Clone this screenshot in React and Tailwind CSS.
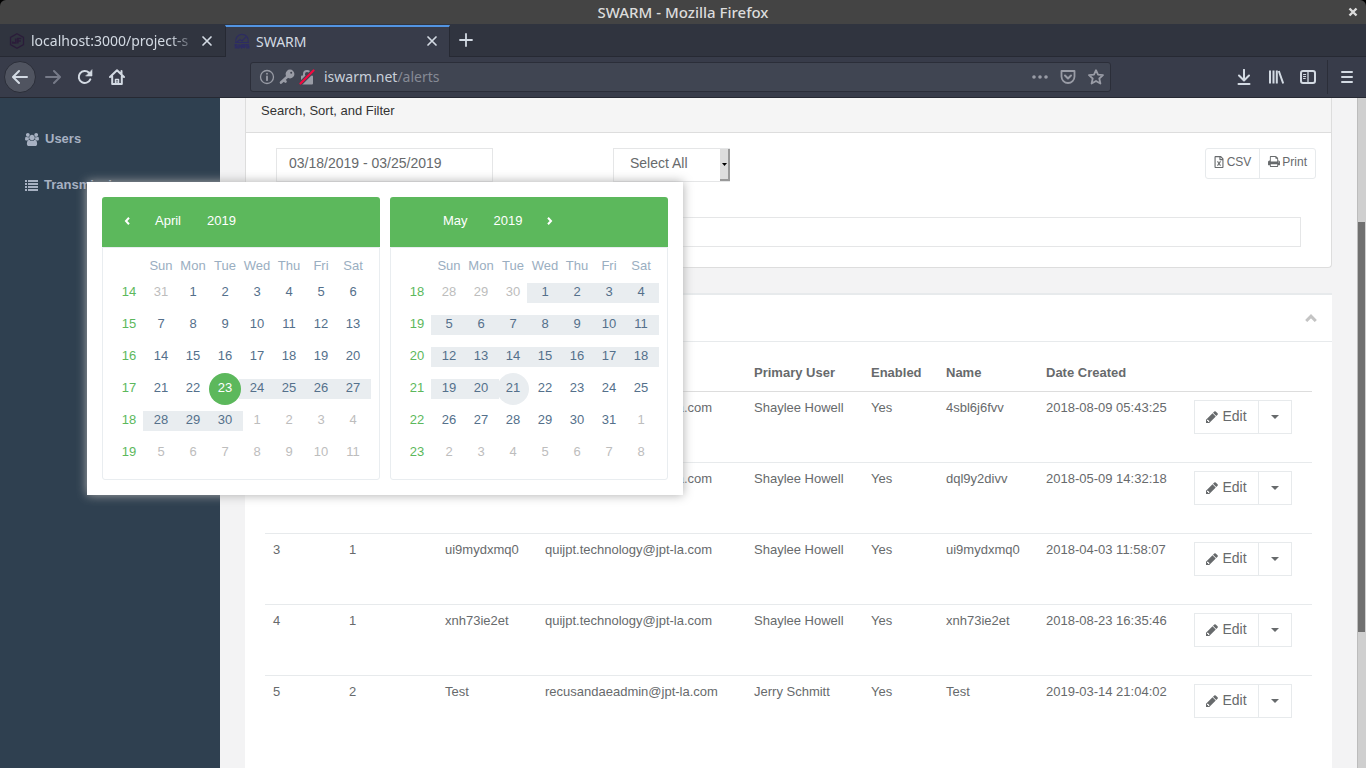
import React from "react";
import { FaRegFileExcel } from "react-icons/fa";

const UsersIcon = () => (
  <svg viewBox="0 0 1920 1792" className="h-[13px] w-[14px]" fill="currentColor" aria-hidden="true">
    <path d="M593 896q-162 5-265 128h-134q-82 0-138-40.5t-56-118.5q0-353 124-353 6 0 43.5 21t97.5 42.5 119 21.5q67 0 133-23-5 37-5 66 0 139 81 256zm1071 637q0 120-73 189.5t-194 69.5h-874q-121 0-194-69.5t-73-189.5q0-53 3.5-103.5t14-109 26.5-108.5 43-97.5 62-81 85.5-53.5 111.5-20q10 0 43 21.5t73 48 107 48 135 21.5 135-21.5 107-48 73-48 43-21.5q61 0 111.5 20t85.5 53.5 62 81 43 97.5 26.5 108.5 14 109 3.5 103.5zm-1024-1277q0 106-75 181t-181 75-181-75-75-181 75-181 181-75 181 75 75 181zm704 384q0 159-112.5 271.5t-271.5 112.5-271.5-112.5-112.5-271.5 112.5-271.5 271.5-112.5 271.5 112.5 112.5 271.5zm576 225q0 78-56 118.5t-138 40.5h-134q-103-123-265-128 81-117 81-256 0-29-5-66 66 23 133 23 59 0 119-21.5t97.5-42.5 43.5-21q124 0 124 353zm-128-609q0 106-75 181t-181 75-181-75-75-181 75-181 181-75 181 75 75 181z" />
  </svg>
);

const ListIcon = () => (
  <svg viewBox="0 0 13 11" className="h-[11px] w-[13px]" fill="currentColor" aria-hidden="true">
    {[0, 3, 6, 9].map((y) => (
      <g key={y}>
        <rect x="0" y={y} width="2" height="2" />
        <rect x="3" y={y} width="10" height="2" />
      </g>
    ))}
  </svg>
);

const PencilIcon = () => (
  <svg viewBox="128 128 1536 1536" className="h-3 w-3" fill="currentColor" aria-hidden="true">
    <path d="M491 1536l91-91-235-235-91 91v107h128v128h107zM960 416l416 416-832 832h-416v-416zm683 96q0 53-37 90l-166 166-416-416 166-165q36-38 90-38 53 0 91 38l235 234q37 39 37 91z" />
  </svg>
);

const PrintIcon = () => (
  <svg viewBox="64 128 1664 1536" className="h-[11px] w-[12px]" fill="currentColor" aria-hidden="true">
    <path d="M448 1536h896v-256h-896v256zm0-640h896v-384h-160q-40 0-68-28t-28-68v-160h-640v640zm1152 64q0-26-19-45t-45-19-45 19-19 45 19 45 45 19 45-19 19-45zm128 0v416q0 13-9.5 22.5t-22.5 9.5h-224v160q0 40-28 68t-68 28h-960q-40 0-68-28t-28-68v-160h-224q-13 0-22.5-9.5t-9.5-22.5v-416q0-79 56.5-135.5t135.5-56.5h64v-544q0-40 28-68t68-28h672q40 0 88 20t76 48l152 152q28 28 48 76t20 88v256h64q79 0 135.5 56.5t56.5 135.5z" />
  </svg>
);

const CalendarArrow = ({ path }) => (
  <svg viewBox="0 0 6 8" className="mx-auto mb-[2px] h-2 w-[6px]" fill="none" stroke="currentColor" strokeWidth="2" aria-hidden="true">
    <path d={path} />
  </svg>
);

/* 16px toolbar glyph with round strokes */
const Glyph = ({ children, className = "" }) => (
  <svg
    viewBox="0 0 16 16"
    className={`h-4 w-4 shrink-0 ${className}`}
    fill="none"
    stroke="currentColor"
    strokeWidth="2"
    strokeLinecap="round"
    strokeLinejoin="round"
    aria-hidden="true"
  >
    {children}
  </svg>
);

const CloseGlyph = () => (
  <Glyph>
    <path d="M4 4l8 8M12 4l-8 8" strokeWidth="1.7" />
  </Glyph>
);

function TitleBar() {
  return (
    <div className="bg-black">
      <header className="grid h-6 grid-cols-[1fr_auto_1fr] items-center rounded-t-md bg-[#444444] text-[#dcdcdc]">
        <span />
        <h1 className="text-[15px] leading-6 font-medium">SWARM - Mozilla Firefox</h1>
        <button type="button" aria-label="Close window" className="mr-2 justify-self-end">
          <svg viewBox="0 0 10 10" className="h-[10px] w-[10px]" stroke="currentColor" strokeWidth="2.4" aria-hidden="true">
            <path d="M1.5 1.5l7 7M8.500 1.500l-7 7" />
          </svg>
        </button>
      </header>
    </div>
  );
}

function TabBar() {
  return (
    <div className="flex h-[33px] border-b border-[#262933] bg-[#30343f] text-[14px] text-[#d3dae3]" role="tablist">
      <div role="tab" aria-selected="false" className="flex w-[225px] items-center pt-px pr-[9px] pl-[9px]">
        <svg viewBox="0 0 16 16" className="h-4 w-4 shrink-0" fill="none" stroke="#2b1c3a" strokeWidth="1.3" aria-hidden="true">
          <path d="M8 .8l6.500 3.700v7L8 15.200l-6.500-3.700v-7z" />
          <path d="M6.800 5.500v4.300H3.700V8.500M8.800 10.500v-5h3.500M8.800 8h3" strokeWidth="1.7" />
        </svg>
        <span className="ml-[6px] w-[166px] overflow-hidden whitespace-nowrap [mask-image:linear-gradient(to_right,black_84%,transparent)]">
          localhost:3000/project-s
        </span>
        <button type="button" aria-label="Close tab" className="ml-[2px]">
          <CloseGlyph />
        </button>
      </div>
      <div
        role="tab"
        aria-selected="true"
        className="mt-px -mb-px flex w-[225px] items-center border-x border-t-2 border-x-[#262933] border-t-[#5294e2] bg-[#383c4a] pr-[9px] pb-[2px] pl-2"
      >
        <svg viewBox="0 0 16 16" className="h-4 w-4 shrink-0" fill="none" stroke="#2d2c63" strokeWidth="1.2" aria-hidden="true">
          <path d="M2 9.500a6.300 6.300 0 1112 0M3 9l3-2.500 2 1.500 4-4M1 9.500h14" />
          <path d="M3.500 11.600H1.200v1.500h2v1.600H.8M5 11.300v3.300l1.200-1.500 1.200 1.500v-3.300M9 14.900v-3.300h2v1.800H9l2 1.500M15 11.600h-2.200v1.500h2v1.600h-2.500" strokeWidth="1.400" />
        </svg>
        <span className="ml-[6px] flex-1">SWARM</span>
        <button type="button" aria-label="Close tab">
          <CloseGlyph />
        </button>
      </div>
      <button type="button" aria-label="New tab" className="px-2">
        <Glyph>
          <path d="M8 2v12M2 8h12" strokeWidth="1.8" />
        </Glyph>
      </button>
    </div>
  );
}

function Toolbar() {
  return (
    <nav className="flex h-[41px] items-center border-b border-[#262933] bg-[#383c4a] pr-[11px] text-[#d3dae3]">
      <button
        type="button"
        aria-label="Back"
        className="ml-1 flex h-8 w-8 items-center justify-center rounded-full border border-[#2b2e39] bg-[#505460]"
      >
        <Glyph>
          <path d="M15 8H1.500M7 2L1 8l6 6" />
        </Glyph>
      </button>
      <button type="button" aria-label="Forward" className="ml-[9px] text-[#767a88]">
        <Glyph>
          <path d="M1 8h13.500M9 2l6 6-6 6" />
        </Glyph>
      </button>
      <button type="button" aria-label="Reload" className="ml-4">
        <Glyph>
          <path d="M13.300 10.300A6 6 0 1112 3.700l1.500 1.500" />
          <path d="M15 1v6H9z" fill="currentColor" strokeWidth="0.6" />
        </Glyph>
      </button>
      <button type="button" aria-label="Home" className="ml-4">
        <Glyph>
          <path d="M1 8l7-6.800L15 8M3.200 7.500V15h9.600V7.500M12.500 2v3" />
          <path d="M6.500 15v-4.500h3V15M8 13v.1" strokeWidth="1.500" />
        </Glyph>
      </button>
      <div className="ml-[125px] flex h-[30px] max-w-[861px] flex-1 items-center rounded-[3px] border border-[#2b2e39] bg-[#404552] px-2 text-[#999ca6]">
        <Glyph>
          <circle cx="8" cy="8" r="6.500" strokeWidth="1.300" />
          <path d="M8 7.500v3.700M8 4.600v.2" strokeWidth="1.800" />
        </Glyph>
        <Glyph className="ml-1">
          <circle cx="11" cy="5" r="3.600" fill="currentColor" strokeWidth="1.600" />
          <path d="M8 8l-6 5.500M5 11l1.500 1.500" strokeWidth="2.600" />
          <circle cx="12.200" cy="3.800" r="1" fill="#404552" stroke="none" />
        </Glyph>
        <Glyph className="ml-1">
          <path d="M5 7V5a3 3 0 016 0v2" />
          <rect x="3" y="7.500" width="10" height="7" fill="currentColor" />
          <path d="M1.500 14.500L14.500 1.500" stroke="#404552" strokeWidth="4" />
          <path d="M1.500 14.500L14.500 1.500" stroke="#f5083f" strokeWidth="2.200" />
        </Glyph>
        <label className="relative ml-[9px] flex-1 text-[14px] leading-5">
          <input
            aria-label="Address"
            defaultValue="iswarm.net/alerts"
            className="w-full bg-transparent text-transparent outline-none"
          />
          <span aria-hidden="true" className="pointer-events-none absolute inset-0 text-[#868a95]">
            <span className="text-[#c9d0da]">iswarm.net</span>/alerts
          </span>
        </label>
        <button type="button" aria-label="Page actions">
          <Glyph>
            <path d="M2 8h.01M8 8h.01M14 8h.01" strokeWidth="3.600" />
          </Glyph>
        </button>
        <button type="button" aria-label="Save to Pocket" className="ml-3">
          <Glyph>
            <path d="M1.500 2h13v5.500a6.500 6.500 0 01-13 0z" strokeWidth="1.800" />
            <path d="M5 6.500l3 3 3-3" />
          </Glyph>
        </button>
        <button type="button" aria-label="Bookmark" className="ml-3 -mr-[2px]">
          <Glyph>
            <path d="M8 1.200l2 4.500 5 .5-3.700 3.300 1.100 5L8 11.900l-4.400 2.600 1.100-5L1 6.200l5-.5z" strokeWidth="1.800" />
          </Glyph>
        </button>
      </div>
      <div className="ml-auto flex items-center">
        <button type="button" aria-label="Downloads">
          <Glyph>
            <path d="M8 .8v10M3 6.500l5 5 5-5M2.500 15h11" />
          </Glyph>
        </button>
        <button type="button" aria-label="Library" className="ml-4">
          <Glyph>
            <path d="M2 1.500v13M5.500 1.500v13M8.800 1.500v13M10.800 2l4.400 12.500" strokeLinecap="butt" />
          </Glyph>
        </button>
        <button type="button" aria-label="Sidebars" className="ml-4">
          <Glyph>
            <rect x="1" y="2" width="14" height="12" rx="2" />
            <path d="M8 2v12" strokeWidth="1.300" />
            <path d="M3.500 5.500h2.200M3.500 7.500h2.200M3.500 9.500h1.800" strokeWidth="1" />
          </Glyph>
        </button>
        <span className="ml-[11px] h-[34px] w-px bg-[#2b2e39]" />
        <button type="button" aria-label="Menu" className="ml-[11px]">
          <Glyph>
            <path d="M3 3h10M3 8h10M3 13h10" />
          </Glyph>
        </button>
      </div>
    </nav>
  );
}

const DAYS = ["Sun", "Mon", "Tue", "Wed", "Thu", "Fri", "Sat"];

/* "lead" and "length" describe the month grid; days outside it are muted */
const MONTHS = [
  { name: "April", previousLast: 31, lead: 1, length: 30, firstWeek: 14, range: [23, 30], selected: 23, prev: true },
  { name: "May", previousLast: 30, lead: 3, length: 31, firstWeek: 18, range: [1, 20], end: 21, next: true },
];

function Month({ month }) {
  const weeks = Array.from({ length: 6 }, (_, w) =>
    Array.from({ length: 7 }, (_, d) => {
      const n = w * 7 + d - month.lead + 1;
      if (n < 1) return { label: month.previousLast + n, muted: true };
      if (n > month.length) return { label: n - month.length, muted: true };
      return {
        label: n,
        selected: n === month.selected,
        end: n === month.end,
        ranged: n >= month.range[0] && n <= month.range[1] && n !== month.selected,
      };
    })
  );
  return (
    <section className="w-[278px]">
      <div className="flex h-[50px] rounded-t-[3px] bg-[#5cb85c] px-[10px] text-white">
        {month.prev ? (
          <button type="button" aria-label="Previous month" className="w-[30px]">
            <CalendarArrow path="M5 .8L2 4l3 3.200" />
          </button>
        ) : (
          <span className="w-[30px]" />
        )}
        <button type="button" className="px-[13px] pb-[2px]">{month.name}</button>
        <button type="button" className="px-[13px] pb-[2px]">2019</button>
        {month.next && (
          <button type="button" aria-label="Next month" className="w-[30px]">
            <CalendarArrow path="M1 .8L4 4 1 7.200" />
          </button>
        )}
      </div>
      <div className="rounded-b-[3px] border border-[#e9edf0] p-[10px]">
        <table className="table-fixed border-collapse text-center">
          <thead>
            <tr className="h-[19px] leading-[15px] text-[#9aaec1]">
              <th className="w-8 p-0" />
              {DAYS.map((d) => (
                <th key={d} className="w-8 p-0 pb-1 font-normal">{d}</th>
              ))}
            </tr>
          </thead>
          <tbody>
            {weeks.map((week, w) => (
              <tr key={w} className="h-8">
                <td className="p-0 pb-[2px] leading-[30px] text-[#5cb85c]">{month.firstWeek + w}</td>
                {week.map((day, d) => (
                  <td key={d} className="relative p-0">
                    {day.ranged && <span className="absolute -inset-x-[2px] top-[6px] h-5 bg-[#e9edf0]" />}
                    <button
                      type="button"
                      className={
                        "relative block h-8 w-8 rounded-full pb-[2px] leading-[30px] " +
                        (day.selected
                          ? "z-10 bg-[#5cb85c] text-white"
                          : day.end
                          ? "z-10 bg-[#e9edf0] text-[#54708b]"
                          : day.muted
                          ? "text-[#bdbdbd]"
                          : "text-[#54708b]")
                      }
                    >
                      {day.label}
                    </button>
                  </td>
                ))}
              </tr>
            ))}
          </tbody>
        </table>
      </div>
    </section>
  );
}

const COLUMNS = [
  ["ID", "w-[76px]"],
  ["Account", "w-[96px]"],
  ["Username", "w-[100px]"],
  ["Email", "w-[209px]"],
  ["Primary User", "w-[117px]"],
  ["Enabled", "w-[75px]"],
  ["Name", "w-[100px]"],
  ["Date Created", "w-[148px]"],
  ["", ""],
];

const ROWS = [
  ["1", "1", "4sbl6j6fvv", "quijpt.technology@jpt-la.com", "Shaylee Howell", "Yes", "4sbl6j6fvv", "2018-08-09 05:43:25"],
  ["2", "1", "dql9y2divv", "quijpt.technology@jpt-la.com", "Shaylee Howell", "Yes", "dql9y2divv", "2018-05-09 14:32:18"],
  ["3", "1", "ui9mydxmq0", "quijpt.technology@jpt-la.com", "Shaylee Howell", "Yes", "ui9mydxmq0", "2018-04-03 11:58:07"],
  ["4", "1", "xnh73ie2et", "quijpt.technology@jpt-la.com", "Shaylee Howell", "Yes", "xnh73ie2et", "2018-08-23 16:35:46"],
  ["5", "2", "Test", "recusandaeadmin@jpt-la.com", "Jerry Schmitt", "Yes", "Test", "2019-03-14 21:04:02"],
];

function FilterCard() {
  return (
    <section className="rounded-b-[4px] border border-t-0 border-[#dddddd] bg-white">
      <h2 className="h-[35px] border-b border-[#dddddd] bg-[#f5f5f5] px-[15px] pt-[3px] leading-5 text-[#333333]">
        Search, Sort, and Filter
      </h2>
      <div className="p-[15px] pb-5">
        <div className="flex items-start">
          <input
            aria-label="Date range"
            defaultValue="03/18/2019 - 03/25/2019"
            className="ml-[15px] h-[34px] w-[217px] border border-[#e5e6e7] px-3 pb-1 text-[14px]"
          />
          <div className="relative ml-[120px]">
            <select
              aria-label="Filter"
              className="block h-[34px] w-[117px] appearance-none border border-[#e5e6e7] bg-white px-4 pb-1 text-[14px]"
            >
              <option>Select All</option>
            </select>
            <span className="pointer-events-none absolute top-px right-0 flex h-8 w-[10px] items-center justify-center border-r-2 border-b-2 border-[#999999] bg-[#dddddd]">
              <svg viewBox="0 0 5 3" className="h-[3px] w-[5px]" aria-hidden="true">
                <path d="M0 0h5L2.500 3z" fill="black" />
              </svg>
            </span>
          </div>
          <div className="ml-auto flex h-[31px] rounded-[3px] border border-[#e7eaec] text-[12px] leading-[18px]">
            <button type="button" className="flex items-center gap-[3px] border-r border-[#e7eaec] px-2 pb-1">
              <FaRegFileExcel className="h-3 w-[10px]" />
              CSV
            </button>
            <button type="button" className="flex items-center gap-[2px] px-2 pb-1">
              <PrintIcon />
              Print
            </button>
          </div>
        </div>
        <div className="mt-[35px] px-[15px]">
          <input aria-label="Search" className="block h-[30px] w-full border border-[#e5e6e7] px-3" />
        </div>
      </div>
    </section>
  );
}

function AlertsCard() {
  return (
    <section className="mt-[25px] flex-1 border-t-2 border-[#e7eaec] bg-white">
      <div className="flex h-[47px] items-center justify-end border-b border-[#e7eaec] px-[15px]">
        <button type="button" aria-label="Collapse" className="text-[#c4c4c4]">
          <svg viewBox="0 0 12 8" className="h-2 w-3" fill="none" stroke="currentColor" strokeWidth="3" aria-hidden="true">
            <path d="M1.200 7L6 2.200 10.800 7" />
          </svg>
        </button>
      </div>
      <div className="px-5 pt-[13px]">
        <table className="w-full table-fixed border-collapse text-left">
          <thead>
            <tr className="border-b border-[#dddddd]">
              {COLUMNS.map(([label, width], i) => (
                <th key={i} className={`h-9 px-2 py-0 font-bold ${width}`}>{label}</th>
              ))}
            </tr>
          </thead>
          <tbody>
            {ROWS.map((row) => (
              <tr key={row[0]} className="h-[71px] border-b border-[#e7eaec] align-top last:border-b-0">
                {row.map((cell, i) => (
                  <td key={i} className="px-2 pt-[6px] leading-5 whitespace-nowrap">{cell}</td>
                ))}
                <td className="px-2 pt-2">
                  <div className="inline-flex h-[34px] border border-[#e7eaec] text-[14px]">
                    <button type="button" className="flex w-16 items-center justify-center gap-1 border-r border-[#e7eaec]">
                      <PencilIcon />
                      Edit
                    </button>
                    <button type="button" aria-label="More actions" className="flex w-8 items-center justify-center">
                      <svg viewBox="0 0 8 4" className="h-1 w-2" fill="currentColor" aria-hidden="true">
                        <path d="M0 0h8L4 4z" />
                      </svg>
                    </button>
                  </div>
                </td>
              </tr>
            ))}
          </tbody>
        </table>
      </div>
    </section>
  );
}

export default function App() {
  return (
    <div className="flex h-screen flex-col overflow-hidden font-['Noto_Sans',sans-serif]">
      <TitleBar />
      <TabBar />
      <Toolbar />
      <div className="relative flex min-h-0 flex-1 overflow-hidden bg-[#f3f3f4] font-['Liberation_Sans',Arial,sans-serif] text-[13px] text-[#676a6c]">
        <aside className="w-[220px] shrink-0 bg-[#2f4050] pt-[18px] font-bold text-[#a7b1c2]">
          <a href="#users" className="flex h-[46px] items-center gap-[6px] px-[25px]">
            <UsersIcon />
            Users
          </a>
          <a href="#transmissions" className="flex h-[46px] items-center gap-[6px] px-[25px]">
            <ListIcon />
            Transmissions
          </a>
        </aside>
        <main className="flex min-w-0 flex-1 flex-col px-[25px]">
          <FilterCard />
          <AlertsCard />
        </main>
        <div className="w-[9px] shrink-0 border-l border-[#bcbcbc] bg-[#cfcfcf] pt-[124px]">
          <div className="mr-px h-[410px] bg-[#707070]" />
        </div>
        <div
          role="dialog"
          aria-label="Choose dates"
          className="absolute top-[84px] left-[87px] flex gap-[10px] bg-white p-[15px] shadow-[0_0_10px_0_#aaaaaa]"
        >
          {MONTHS.map((month) => (
            <Month key={month.name} month={month} />
          ))}
        </div>
      </div>
    </div>
  );
}
